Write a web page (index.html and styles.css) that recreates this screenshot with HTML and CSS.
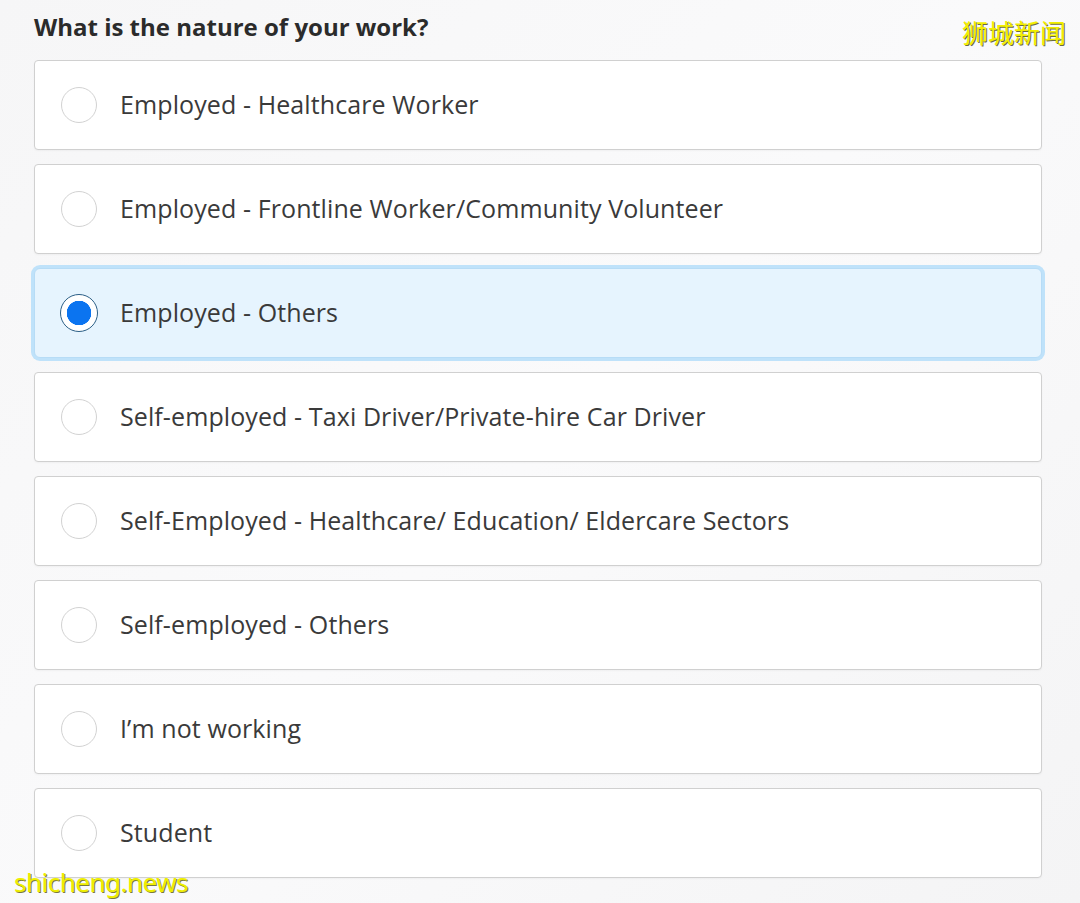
FILE: index.html
```html
<!DOCTYPE html>
<html lang="en">
<head>
    <meta charset="UTF-8">
    <meta name="viewport" content="width=device-width, initial-scale=1.0">
    <title>Nature of work</title>
    <link rel="stylesheet" href="styles.css">
</head>
<body>
    <div class="mark-top">狮城新闻</div>

    <form class="question">
        <h1 class="title">What is the nature of your work?</h1>

        <div class="options">
            <label class="option">
                <span class="radio"></span>
                <span class="option-text">Employed - Healthcare Worker</span>
            </label>
            <label class="option">
                <span class="radio"></span>
                <span class="option-text">Employed - Frontline Worker/Community Volunteer</span>
            </label>
            <label class="option selected">
                <span class="radio"></span>
                <span class="option-text">Employed - Others</span>
            </label>
            <label class="option">
                <span class="radio"></span>
                <span class="option-text">Self-employed - Taxi Driver/Private-hire Car Driver</span>
            </label>
            <label class="option">
                <span class="radio"></span>
                <span class="option-text">Self-Employed - Healthcare/ Education/ Eldercare Sectors</span>
            </label>
            <label class="option">
                <span class="radio"></span>
                <span class="option-text">Self-employed - Others</span>
            </label>
            <label class="option">
                <span class="radio"></span>
                <span class="option-text">I’m not working</span>
            </label>
            <label class="option">
                <span class="radio"></span>
                <span class="option-text">Student</span>
            </label>
        </div>
    </form>

    <div class="mark-bottom">shicheng.news</div>
</body>
</html>
```

FILE: styles.css
```css
body {
    margin: 0;
    height: 903px;
    overflow: hidden;
    background: linear-gradient(135deg, #f6f6f7 0%, #fafafb 50%, #f4f4f5 100%);
    font-family: "Open Sans", Arial, sans-serif;
    color: #333;
    position: relative;
}
.question {
    padding: 12px 38px 0 34px;
}
.title {
    margin: 0 0 18px;
    font-size: 24px;
    line-height: 30px;
    font-weight: 700;
    color: #2b2b2b;
}
.options {
    display: flex;
    flex-direction: column;
    gap: 14px;
}
.option {
    display: flex;
    align-items: center;
    height: 90px;
    box-sizing: border-box;
    padding-left: 26px;
    background: #fff;
    border: 1px solid #d0d0d0;
    border-radius: 4px;
    box-shadow: 0 1px 2px rgba(0, 0, 0, 0.04);
}
.option.selected {
    background: #e6f4fe;
    border-color: #b7dcf6;
    box-shadow: 0 0 0 3px #bfe2fa;
    border-radius: 6px;
}
.radio {
    width: 36px;
    height: 36px;
    box-sizing: border-box;
    border: 1.5px solid #d2d2d2;
    border-radius: 50%;
    background: #fff;
    flex-shrink: 0;
    margin-right: 23px;
}
.selected .radio {
    width: 38px;
    height: 38px;
    margin-left: -1px;
    margin-right: 22px;
    border: 1.5px solid #2c5f86;
    background: radial-gradient(circle, #0b74f0 0, #0b74f0 12px, #fff 12.5px);
}
.option-text {
    font-size: 25px;
    color: #3a3a3a;
    letter-spacing: 0.1px;
    margin-top: -2px;
}
.mark-top {
    position: absolute;
    top: 13px;
    right: 14px;
    font-family: "Noto Sans CJK SC", sans-serif;
    font-size: 26px;
    color: #f2ef00;
    text-shadow: 1px 1px 0 #6b6b40;
}
.mark-bottom {
    position: absolute;
    left: 14px;
    top: 864px;
    font-family: "Noto Sans", sans-serif;
    font-size: 26px;
    color: #eeee00;
    letter-spacing: -0.5px;
    text-shadow: 1px 1px 0 #7a7a3a;
}
```
